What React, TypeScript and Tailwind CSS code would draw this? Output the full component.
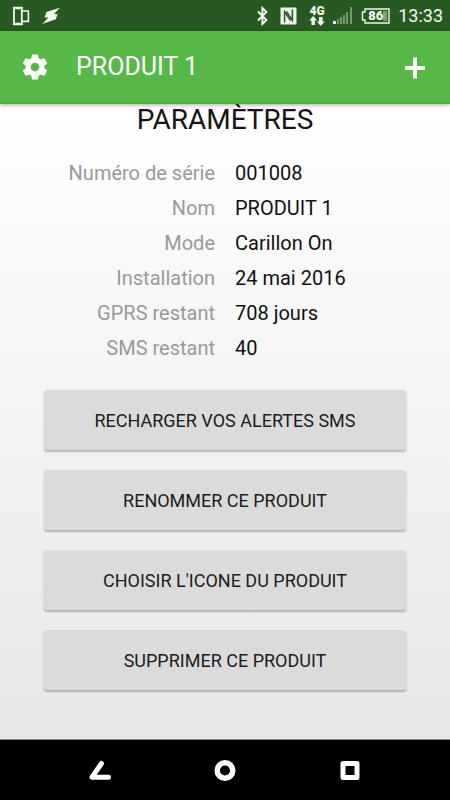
import React from 'react';

interface InfoRow {
  label: string;
  value: string;
}

const infos: InfoRow[] = [
  { label: 'Numéro de série', value: '001008' },
  { label: 'Nom', value: 'PRODUIT 1' },
  { label: 'Mode', value: 'Carillon On' },
  { label: 'Installation', value: '24 mai 2016' },
  { label: 'GPRS restant', value: '708 jours' },
  { label: 'SMS restant', value: '40' },
];

const actions: string[] = [
  'RECHARGER VOS ALERTES SMS',
  'RENOMMER CE PRODUIT',
  "CHOISIR L'ICONE DU PRODUIT",
  'SUPPRIMER CE PRODUIT',
];

const StatusBar: React.FC = () => (
  <div className="flex h-[31px] shrink-0 items-center justify-between bg-[#285923] pl-3 pr-[7px] text-[#f1f6f0]">
    <div className="flex items-center gap-3">
      {/* Two devices */}
      <svg width="18" height="20" viewBox="0 0 18 20" fill="none" stroke="currentColor">
        <path d="M2 1V19M9.8 1V19" strokeWidth="1.8" />
        <path d="M1.1 2H10.7M1.1 18H10.7" strokeWidth="2.4" />
        <path d="M9.5 5H16.4V15.4H9.5" strokeWidth="1.6" />
      </svg>
      {/* Bolt */}
      <svg width="18" height="18" viewBox="0 0 18 18" fill="currentColor">
        <path d="M17.8 .8L4.4 5L2.6 10.4L6.4 10.6L.3 17L13.8 12.2L15.6 7.2L12 7Z" />
      </svg>
    </div>

    <div className="flex items-center">
      {/* Bluetooth */}
      <svg className="mr-3" width="11" height="20" viewBox="0 0 11 20" fill="none" stroke="currentColor" strokeWidth="1.9">
        <path d="M1 5.5L9.4 14L5.4 18V2L9.4 6L1 14.5" />
      </svg>
      {/* NFC */}
      <svg className="mr-3" width="17" height="18" viewBox="0 0 17 18">
        <rect x="0.5" y="0.5" width="16" height="17" rx="1" fill="currentColor" />
        <path d="M4.6 15.5V4.8L10.6 13.6M12.4 2.5V13.2L6.4 4.4" fill="none" stroke="#285923" strokeWidth="1.5" />
      </svg>
      <div className="mr-2 flex w-4 flex-col items-center">
        <span className="text-[12px] font-black leading-[10px]">4G</span>
        <svg width="16" height="10" viewBox="0 0 16 10" fill="currentColor">
          <path d="M4.2 0L8.2 4.6H6V9H2.4V4.6H.2Z" />
          <path d="M11.8 10L7.8 5.4H10V1H13.6V5.4H15.8Z" />
        </svg>
      </div>
      {/* Signal strength */}
      <svg className="mr-2" width="20" height="17" viewBox="0 0 20 17" fill="currentColor">
        <rect x="0" y="14" width="3" height="3" />
        <g opacity="0.4">
          <rect x="4" y="12" width="2" height="5" />
          <rect x="7" y="10" width="2" height="7" />
          <rect x="10" y="8" width="2" height="9" />
          <rect x="13" y="5" width="2" height="12" />
          <rect x="17" y="0" width="2" height="17" />
        </g>
      </svg>
      <div className="relative mr-2 h-4 w-[29px]">
        <svg className="absolute inset-0" width="29" height="16" viewBox="0 0 29 16" fill="none">
          <path d="M4 1H28V15H4V12H1.5V4H4Z" stroke="currentColor" strokeWidth="1.4" />
          <rect x="22" y="3" width="4" height="10" fill="#7f9f7b" />
        </svg>
        <span className="absolute inset-0 text-center text-[13px] font-black leading-4">86</span>
      </div>
      <span className="text-[18px] leading-6">13:33</span>
    </div>
  </div>
);

const Header: React.FC = () => (
  <header className="relative z-10 flex h-[73px] shrink-0 items-center border-b-2 border-[#4daa40] bg-[#57b848] px-5 text-white shadow-[0_1px_4px_rgba(0,0,0,0.35)]">
    <button aria-label="Paramètres">
      <svg width="30" height="30" viewBox="0 0 24 24" fill="currentColor">
        <path d="M19.43 12.98c.04-.32.07-.64.07-.98s-.03-.66-.07-.98l2.11-1.65c.19-.15.24-.42.12-.64l-2-3.46c-.12-.22-.39-.3-.61-.22l-2.49 1c-.52-.4-1.08-.73-1.69-.98l-.38-2.65C14.46 2.18 14.25 2 14 2h-4c-.25 0-.46.18-.49.42l-.38 2.65c-.61.25-1.17.59-1.69.98l-2.49-1c-.23-.09-.49 0-.61.22l-2 3.46c-.13.22-.07.49.12.64l2.11 1.65c-.04.32-.07.65-.07.98s.03.66.07.98l-2.11 1.65c-.19.15-.24.42-.12.64l2 3.46c.12.22.39.3.61.22l2.49-1c.52.4 1.08.73 1.69.98l.38 2.65c.03.24.24.42.49.42h4c.25 0 .46-.18.49-.42l.38-2.65c.61-.25 1.17-.59 1.69-.98l2.49 1c.23.09.49 0 .61-.22l2-3.46c.12-.22.07-.49-.12-.64l-2.11-1.65zM12 15.5c-1.93 0-3.5-1.57-3.5-3.5s1.57-3.5 3.5-3.5 3.5 1.57 3.5 3.5-1.57 3.5-3.5 3.5z" />
      </svg>
    </button>
    <h1 className="ml-[26px] flex-1 text-[25px] leading-8">PRODUIT 1</h1>
    <button aria-label="Ajouter">
      <svg width="30" height="30" viewBox="0 0 30 30" fill="none" stroke="currentColor" strokeWidth="4">
        <path d="M5 16H25M15 5.5V26.5" />
      </svg>
    </button>
  </header>
);

const NavBar: React.FC = () => (
  <nav className="flex h-[60px] shrink-0 items-center justify-between bg-black px-[85px] text-white">
    <button aria-label="Retour">
      <svg width="30" height="30" viewBox="0 0 30 30" fill="none" stroke="currentColor" strokeWidth="5" strokeLinecap="round" strokeLinejoin="round">
        <path d="M16.5 8.5L7 22.2H23.5" />
      </svg>
    </button>
    <button aria-label="Accueil">
      <svg width="30" height="30" viewBox="0 0 30 30" fill="none" stroke="currentColor" strokeWidth="5.5">
        <circle cx="15" cy="15.5" r="7.8" />
      </svg>
    </button>
    <button aria-label="Applications récentes">
      <svg width="30" height="30" viewBox="0 0 30 30" fill="none" stroke="currentColor" strokeWidth="5" strokeLinejoin="round">
        <rect x="8" y="8.5" width="14" height="14" />
      </svg>
    </button>
  </nav>
);

const App: React.FC = () => {
  return (
    <div className="flex min-h-screen flex-col font-['Roboto',sans-serif]">
      <StatusBar />
      <Header />

      <main className="flex flex-1 flex-col border-b border-[#8c8c8c] bg-gradient-to-b from-white to-[#e7e7e7] pb-12">
        <h2 className="text-center text-[28px] leading-8 text-[#151515]">PARAMÈTRES</h2>

        <dl className="mt-5">
          {infos.map((info) => (
            <div key={info.label} className="grid grid-cols-2 gap-5 text-[20px] leading-[35px]">
              <dt className="text-right text-[#999999]">{info.label}</dt>
              <dd className="text-[#111111]">{info.value}</dd>
            </div>
          ))}
        </dl>

        <div className="mt-6 flex flex-col gap-5 px-11">
          {actions.map((action) => (
            <button
              key={action}
              className="h-[60px] rounded-[3px] bg-[#dbdbdb] text-[18px] text-[#1c1c1c] shadow-[0_2px_2px_rgba(0,0,0,0.25)]"
            >
              {action}
            </button>
          ))}
        </div>
      </main>

      <NavBar />
    </div>
  );
};

export default App;
